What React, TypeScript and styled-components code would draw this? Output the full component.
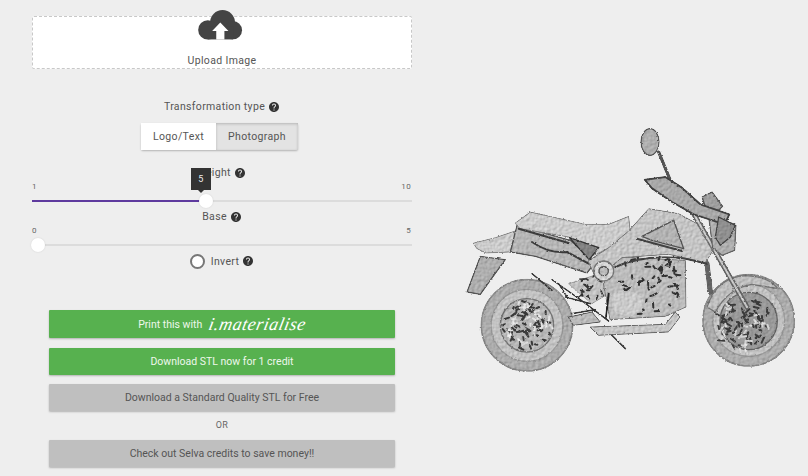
import React from 'react';
import styled, { createGlobalStyle } from 'styled-components';
import { MdHelp } from 'react-icons/md';

const GlobalStyle = createGlobalStyle`
  html, body {
    margin: 0;
    padding: 0;
    background: #eeeeee;
    overflow: hidden;
  }
  body {
    font-family: Roboto, "Liberation Sans", sans-serif;
    color: #555555;
  }
`;

const CloudIcon = () => (
  <CloudSvg viewBox="0 0 48 32" width="48" height="32">
    <circle cx="26.7" cy="13.3" r="13.3" fill="#444" />
    <circle cx="11" cy="21.2" r="10.3" fill="#444" />
    <circle cx="37.7" cy="21.5" r="9.8" fill="#444" />
    <rect x="11" y="18" width="27" height="13.4" fill="#444" />
    <polygon points="24.3,13.3 15.6,22.3 20,22.3 20,31.4 28.7,31.4 28.7,22.3 33,22.3" fill="#fff" />
  </CloudSvg>
);

const speckles = (cx: number, cy: number, radius: number, count: number, seed: number) => {
  let s = seed;
  const next = () => {
    s = (s * 9301 + 49297) % 233280;
    return s / 233280;
  };
  const out: string[] = [];
  for (let i = 0; i < count; i++) {
    const a = next() * Math.PI * 2;
    const r = Math.sqrt(next()) * radius;
    const x = cx + Math.cos(a) * r;
    const y = cy + Math.sin(a) * r;
    const d = next() * Math.PI * 2;
    const l = 5 + next() * 12;
    out.push(`M${x.toFixed(0)} ${y.toFixed(0)}l${(Math.cos(d) * l).toFixed(0)} ${(Math.sin(d) * l).toFixed(0)}`);
  }
  return out.join('');
};

const Motorcycle = () => (
  <BikeSvg viewBox="0 0 1074 810" width="358" height="270">
    <defs>
      <filter id="rough" x="-5%" y="-5%" width="110%" height="110%" colorInterpolationFilters="sRGB">
        <feTurbulence type="fractalNoise" baseFrequency="0.16" numOctaves="2" seed="4" result="n" />
        <feDisplacementMap in="SourceGraphic" in2="n" scale="7" xChannelSelector="R" yChannelSelector="G" result="d" />
        <feTurbulence type="fractalNoise" baseFrequency="0.11" numOctaves="2" seed="9" result="bump" />
        <feDiffuseLighting in="bump" surfaceScale="1.6" lightingColor="#ffffff" result="lit">
          <feDistantLight azimuth="225" elevation="62" />
        </feDiffuseLighting>
        <feComposite in="lit" in2="d" operator="arithmetic" k1="1.1" k2="0" k3="0" k4="0" result="tex" />
        <feComposite in="tex" in2="d" operator="in" />
        <feGaussianBlur stdDeviation="0.8" />
      </filter>
    </defs>
    <g filter="url(#rough)" strokeLinejoin="round" strokeLinecap="round" transform="translate(6 6)">
      {/* rear wheel */}
      <circle cx="225" cy="625" r="137" fill="#b2b2b2" stroke="#8c8c8c" strokeWidth="5" />
      <circle cx="225" cy="625" r="108" fill="#c8c8c8" stroke="#9c9c9c" strokeWidth="4" />
      <circle cx="225" cy="625" r="80" fill="#bdbdbd" stroke="#777" strokeWidth="4" />
      <path d={speckles(225, 625, 72, 60, 11)} stroke="#3c3c3c" strokeWidth="6" fill="none" />
      <path d={speckles(225, 625, 72, 28, 37)} stroke="#e8e8e8" strokeWidth="6" fill="none" />

      {/* front wheel */}
      <circle cx="890" cy="610" r="137" fill="#b2b2b2" stroke="#8c8c8c" strokeWidth="5" />
      <circle cx="890" cy="610" r="108" fill="#c8c8c8" stroke="#9c9c9c" strokeWidth="4" />
      <circle cx="890" cy="612" r="86" fill="#9e9e9e" stroke="#666" strokeWidth="4" />
      <path d={speckles(875, 620, 78, 70, 53)} stroke="#3c3c3c" strokeWidth="6" fill="none" />
      <path d={speckles(875, 620, 78, 26, 71)} stroke="#dedede" strokeWidth="6" fill="none" />
      <path d="M765 570Q795 480 880 476Q950 478 978 515L900 502Q830 512 790 585Z" fill="#c4c4c4" stroke="#777" strokeWidth="4" />

      {/* tail and rear fender */}
      <path d="M45 525L85 418L160 428L122 480L85 532Z" fill="#b4b4b4" stroke="#555" strokeWidth="4" />
      <path d="M65 378L130 362L195 340L175 405L102 408L75 395Z" fill="#d2d2d2" stroke="#888" strokeWidth="3" />

      {/* linkage under the frame */}
      <path d="M350 600L420 585L445 615L365 625Z" fill="#c0c0c0" stroke="#555" strokeWidth="3" />
      <path d="M300 488L385 548L470 612M340 540L415 560M360 590L430 578M240 470L300 520M395 500L420 530M320 500L345 540" stroke="#383838" strokeWidth="5" fill="none" />
      <path d="M350 500L440 470L470 530L420 560Z" fill="#c8c8c8" stroke="#777" strokeWidth="2" />
      <path d={speckles(410, 515, 40, 16, 17)} stroke="#333" strokeWidth="5" fill="none" />

      {/* swing arm, seat */}
      <path d="M175 405L195 325L355 370L430 435L405 468L250 418Z" fill="#bcbcbc" stroke="#555" strokeWidth="4" />
      <path d="M190 318L235 285L400 322L470 322L530 298L535 345L470 395L425 415L350 360L205 335Z" fill="#d2d2d2" stroke="#888" strokeWidth="3" />
      <path d="M352 362L440 392L412 428Z" fill="#868686" stroke="#333" strokeWidth="4" />
      <path d="M200 335L350 378M240 375Q290 410 345 405L410 440" stroke="#3e3e3e" strokeWidth="6" fill="none" />

      {/* engine */}
      <path d="M455 500L500 420L700 430L702 570L640 598L475 608Z" fill="#c2c2c2" stroke="#777" strokeWidth="3" />
      <path d={speckles(595, 500, 95, 55, 91)} stroke="#333" strokeWidth="6" fill="none" />
      <path d="M480 530Q530 510 570 540Q590 580 540 595Q490 600 480 570Z" fill="#d0d0d0" />
      <path d="M415 630L640 622L670 585L684 600L650 645L440 655Z" fill="#cccccc" stroke="#666" strokeWidth="3" />
      <path d="M480 655L520 695" stroke="#444" strokeWidth="6" fill="none" />
      <path d="M470 530L462 600" stroke="#222" strokeWidth="6" fill="none" />

      {/* forks and bars */}
      <path d="M722 285L885 570M765 440L775 525" stroke="#666" strokeWidth="16" fill="none" />
      <path d="M722 285L885 570" stroke="#d0d0d0" strokeWidth="6" fill="none" />
      <path d="M620 105L655 190" stroke="#555" strokeWidth="10" fill="none" />
      <ellipse cx="594" cy="75" rx="27" ry="40" fill="#b4b4b4" stroke="#555" strokeWidth="4" />
      <path d="M750 240L780 225L812 268L800 280L760 270Z" fill="#a4a4a4" stroke="#555" strokeWidth="4" />
      <path d="M770 300L852 322L848 400L810 415L782 392Z" fill="#b4b4b4" stroke="#666" strokeWidth="4" />
      <path d="M578 188L640 180L690 212L745 262L832 292L818 322L725 292L660 255L600 214Z" fill="#aeaeae" stroke="#444" strokeWidth="6" />
      <path d="M800 300L850 325L835 360L805 385L790 360Z" fill="#949494" stroke="#444" strokeWidth="4" />

      {/* tank and frame */}
      <path d="M530 342L590 275L680 290L735 320L782 402L760 437L650 412L510 422L432 485L408 432L470 392Z" fill="#cbcbcb" stroke="#777" strokeWidth="3" />
      <path d="M570 358L665 310L695 395L600 370Z" fill="#b8b8b8" stroke="#555" strokeWidth="4" />
      <path d="M555 365L690 402M490 450Q580 410 700 425L765 440" stroke="#444" strokeWidth="6" fill="none" />
      <circle cx="455" cy="462" r="30" fill="#dedede" stroke="#777" strokeWidth="4" />
      <circle cx="455" cy="462" r="14" fill="#c0c0c0" stroke="#555" strokeWidth="4" />
    </g>
  </BikeSvg>
);

const sliders = {
  height: { min: '1', max: '10', percent: 44.2, value: '5' },
  base: { min: '0', max: '5', percent: 0, value: '' },
};

const Slider = ({ min, max, percent, value }: { min: string; max: string; percent: number; value: string }) => (
  <SliderBox>
    <Ticks>
      <span>{min}</span>
      <span>{max}</span>
    </Ticks>
    <Track>
      {value && <Fill style={{ width: `${percent}%` }} />}
      <Thumb style={{ left: `${percent}%` }} />
      {value && <Bubble style={{ left: `${percent}%` }}>{value}</Bubble>}
    </Track>
  </SliderBox>
);

const HelpIcon = () => <HelpGlyph size={12} />;

export default function App() {
  return (
    <Page>
      <GlobalStyle />
      <Controls>
        <UploadBox>
          <CloudIcon />
          <UploadLabel>Upload Image</UploadLabel>
        </UploadBox>

        <FieldLabel $top={31}>Transformation type<HelpIcon /></FieldLabel>
        <Segments>
          <Segment>Logo/Text</Segment>
          <Segment $active>Photograph</Segment>
        </Segments>

        <FieldLabel $top={16}>Height<HelpIcon /></FieldLabel>
        <Slider {...sliders.height} />
        <FieldLabel $top={8}>Base<HelpIcon /></FieldLabel>
        <Slider {...sliders.base} />

        <InvertRow>
          <Radio />
          <span>Invert</span>
          <HelpIcon />
        </InvertRow>

        <Actions>
          <ActionButton $kind="green" $tall>
            Print this with <ScriptLogo>i.materialise</ScriptLogo>
          </ActionButton>
          <ActionButton $kind="green" $gap={10}>Download STL now for 1 credit</ActionButton>
          <ActionButton $kind="grey" $gap={9}>Download a Standard Quality STL for Free</ActionButton>
          <OrText>OR</OrText>
          <ActionButton $kind="grey">Check out Selva credits to save money!!</ActionButton>
        </Actions>
      </Controls>
      <Preview>
        <Motorcycle />
      </Preview>
    </Page>
  );
}

const Page = styled.div`
  display: flex;
  width: 808px;
  height: 476px;
  padding: 16px 0 0 32px;
  box-sizing: border-box;
  overflow: hidden;
  background: #eeeeee;
`;

const Controls = styled.div`
  display: flex;
  flex-direction: column;
  width: 380px;
  flex: none;
  text-align: center;
  font-size: 10.5px;
  letter-spacing: 0.35px;
`;

const UploadBox = styled.div`
  display: flex;
  flex-direction: column;
  align-items: center;
  height: 53px;
  box-sizing: border-box;
  background: #ffffff;
  border: 1px dashed #c8c8c8;
  border-radius: 2px;
`;

const CloudSvg = styled.svg`
  display: block;
  margin: -7px 0 0 -5px;
`;

const UploadLabel = styled.div`
  margin-top: 14px;
  line-height: 14px;
`;

const FieldLabel = styled.div<{ $top: number }>`
  display: flex;
  align-items: center;
  justify-content: center;
  gap: 3px;
  height: 14px;
  margin-top: ${(p) => p.$top}px;
  line-height: 14px;
  white-space: pre;
`;

const HelpGlyph = styled(MdHelp)`
  color: #333333;
  flex: none;
`;

const Segments = styled.div`
  display: flex;
  align-self: center;
  margin: 9px 0 0 -5px;
  box-shadow: 0 1px 2px rgba(0, 0, 0, 0.25);
  border-radius: 2px;
`;

const Segment = styled.div<{ $active?: boolean }>`
  display: flex;
  align-items: center;
  justify-content: center;
  width: ${(p) => (p.$active ? 82 : 75)}px;
  height: 27px;
  background: ${(p) => (p.$active ? '#e3e3e3' : '#ffffff')};
  box-shadow: ${(p) => (p.$active ? 'inset 0 1px 3px rgba(0, 0, 0, 0.2)' : 'none')};
`;

const SliderBox = styled.div`
  display: flex;
  flex-direction: column;
`;

const Ticks = styled.div`
  display: flex;
  justify-content: space-between;
  margin-top: 1px;
  height: 12px;
  line-height: 12px;
  padding-right: 1px;
  font-size: 8px;
  color: #666666;
`;

const Track = styled.div`
  position: relative;
  margin-top: 7px;
  height: 2px;
  background: #dcdcdc;
`;

const Fill = styled.div`
  height: 2px;
  background: #5e3a9e;
`;

const Thumb = styled.div`
  position: absolute;
  top: -6px;
  width: 14px;
  height: 14px;
  margin-left: -1px;
  border-radius: 50%;
  background: #ffffff;
  box-shadow: 0 0 2px rgba(0, 0, 0, 0.12);
`;

const Bubble = styled.div`
  position: absolute;
  top: -32px;
  width: 20px;
  height: 22px;
  margin-left: -9px;
  display: flex;
  align-items: center;
  justify-content: center;
  background: #333333;
  color: #eeeeee;
  font-size: 9px;
  &::after {
    content: '';
    position: absolute;
    bottom: -3px;
    left: 7px;
    border-left: 3px solid transparent;
    border-right: 3px solid transparent;
    border-top: 3px solid #333333;
  }
`;

const InvertRow = styled.div`
  display: flex;
  align-items: center;
  justify-content: center;
  gap: 3px;
  height: 16px;
  margin-top: 7px;
`;

const Radio = styled.div`
  width: 11px;
  height: 11px;
  margin-right: 3px;
  border: 2px solid #777777;
  border-radius: 50%;
  background: #ffffff;
`;

const Actions = styled.div`
  display: flex;
  flex-direction: column;
  padding: 0 17px;
  margin-top: 41px;
`;

const ActionButton = styled.div<{ $kind: 'green' | 'grey'; $gap?: number; $tall?: boolean }>`
  display: flex;
  align-items: center;
  justify-content: center;
  gap: 4px;
  height: ${(p) => (p.$tall ? 28 : 27)}px;
  margin-top: ${(p) => p.$gap ?? 0}px;
  border-radius: 1px;
  letter-spacing: 0;
  white-space: pre;
  background: ${(p) => (p.$kind === 'green' ? '#57b14f' : '#bfbfbf')};
  color: ${(p) => (p.$kind === 'green' ? '#eef7ec' : '#555555')};
  box-shadow: 0 1px 2px rgba(0, 0, 0, 0.25);
`;

const ScriptLogo = styled.span`
  display: inline-block;
  font-family: "Liberation Serif", serif;
  font-style: italic;
  font-size: 18px;
  letter-spacing: 0.5px;
  line-height: 20px;
  color: #ffffff;
  transform: skewX(-12deg);
`;

const OrText = styled.div`
  height: 29px;
  line-height: 29px;
  font-size: 9px;
  letter-spacing: 0.3px;
  color: #666666;
`;

const Preview = styled.div`
  display: flex;
  align-items: flex-start;
  padding: 99px 0 0 38px;
`;

const BikeSvg = styled.svg`
  display: block;
  flex: none;
`;
